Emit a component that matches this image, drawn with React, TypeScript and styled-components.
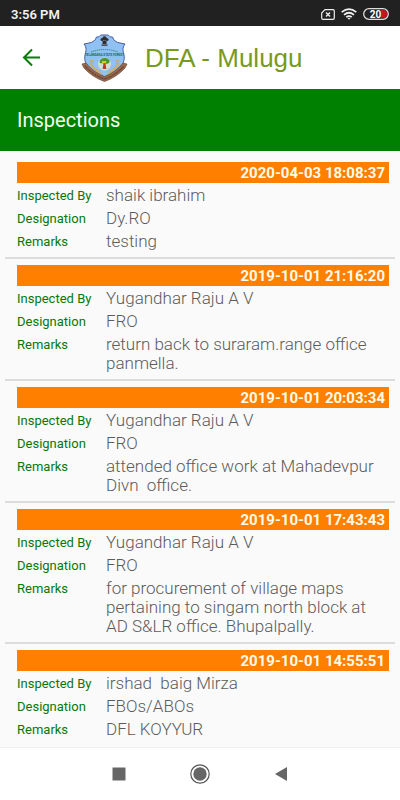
import React from "react";
import styled, { createGlobalStyle } from "styled-components";

const GlobalStyle = createGlobalStyle`
  * { box-sizing: border-box; }
  body { margin: 0; background: #fafafa; font-family: Roboto, "Liberation Sans", sans-serif; }
  h1, h2, dl, dd, p, ul { margin: 0; padding: 0; }
`;

const Screen = styled.div`
  height: 100vh;
  display: flex;
  flex-direction: column;
  overflow: hidden;
`;

const StatusBar = styled.div`
  flex: none;
  display: flex;
  align-items: center;
  justify-content: space-between;
  height: 26px;
  padding: 2px 11px 0;
  background: #212121;
  color: #f2f2f2;
  font-size: 13px;
  font-weight: 600;
`;

const StatusIcons = styled.div`
  display: flex;
  align-items: center;
  gap: 6px;
  svg { display: block; }
`;

const Header = styled.header`
  flex: none;
  display: flex;
  align-items: center;
  height: 63px;
  padding: 0 20px;
  background: #fff;
`;

const IconButton = styled.button`
  display: grid;
  place-items: center;
  padding: 0;
  border: 0;
  background: none;
  cursor: pointer;
  svg { display: block; }
`;

const Emblem = styled.svg`
  flex: none;
  margin: 0 17px 0 38px;
`;

const Brand = styled.h1`
  color: #789a1c;
  font: 400 26px/32px "Liberation Sans", Arial, sans-serif;
  white-space: nowrap;
`;

const TitleBar = styled.h2`
  flex: none;
  && { padding: 0 17px; }
  background: #008000;
  color: #f4fff0;
  font-size: 20px;
  font-weight: 400;
  line-height: 62px;
`;

const List = styled.ul`
  flex: 1;
  min-height: 0;
  overflow: hidden;
  && { padding: 11px 5px 0; }
  list-style: none;
`;

const Item = styled.li`
  padding: 0 6px 6px 12px;
  margin-bottom: 6px;
  border-bottom: 2px solid #dcdcdc;
  &:last-child { border-bottom: 0; }
`;

const Stamp = styled.time`
  display: block;
  padding: 0 4px;
  margin-bottom: 3px;
  background: #ff7f00;
  color: #fffbe8;
  font-size: 15px;
  font-weight: 700;
  line-height: 22px;
  height: 21px;
  text-align: right;
`;

const Details = styled.dl`
  display: grid;
  grid-template-columns: 89px 1fr;
  row-gap: 4px;
  && { padding-right: 12px; }
`;

const Label = styled.dt`
  color: #087808;
  font-size: 13px;
  line-height: 20px;
  height: 19px;
`;

const Value = styled.dd`
  color: #5c5c5c;
  font-size: 17px;
  font-weight: 300;
  line-height: 19px;
  white-space: pre-wrap;
`;

const NavBar = styled.nav`
  flex: none;
  display: flex;
  align-items: center;
  justify-content: center;
  gap: 60px;
  height: 53px;
  background: #fff;
  border-top: 1px solid #f0f0f0;
`;

interface Inspection {
  time: string;
  by: string;
  designation: string;
  remarks: string;
}

const inspections: Inspection[] = [
  { time: "2020-04-03 18:08:37", by: "shaik ibrahim", designation: "Dy.RO", remarks: "testing" },
  { time: "2019-10-01 21:16:20", by: "Yugandhar Raju A V", designation: "FRO", remarks: "return back to suraram.range office panmella." },
  { time: "2019-10-01 20:03:34", by: "Yugandhar Raju A V", designation: "FRO", remarks: "attended office work at Mahadevpur Divn  office." },
  { time: "2019-10-01 17:43:43", by: "Yugandhar Raju A V", designation: "FRO", remarks: "for procurement of village maps pertaining to singam north block at AD S&LR office. Bhupalpally." },
  { time: "2019-10-01 14:55:51", by: "irshad  baig Mirza", designation: "FBOs/ABOs", remarks: "DFL KOYYUR" },
];

const ForestEmblem = () => (
  <Emblem width="48" height="50" viewBox="0 0 48 50" role="img" aria-label="Telangana State Forest emblem">
    <path d="M16.500 4C19 4.500 20 2.500 21 2H28C29 2.500 30 4.500 32.500 4Q34 9 40 10L45 11C42 15 43 18 44 22C46 32 36 41 24.500 46C12 41 3 32 5 22C6 18 7 15 4 11L9 10Q15 9 16.500 4Z" fill="#8fc1f5" stroke="#4a5c9c" strokeWidth="1" />
    <g fill="#352d2a">
      <circle cx="24.500" cy="5.500" r="2.200" /><circle cx="22" cy="6.500" r="1.500" /><circle cx="27" cy="6.500" r="1.500" />
      <path d="M22.500 8h4v3h-4zM21.500 11.500h6v1.300h-6z" />
    </g>
    <path d="M11 19Q24.500 14 38 19" fill="none" stroke="#4d9a83" strokeWidth="1.200" strokeDasharray="1.400 .6" />
    <text x="24.500" y="23" textAnchor="middle" fill="#176a5a" fontSize="3" fontWeight="700">TELANGANA STATE FOREST</text>
    <path d="M12 27C10 33 14 37 21 40M37 27C39 33 35 37 28 40" fill="none" stroke="#c9ab6c" strokeWidth="3.200" strokeDasharray="2 .8" />
    <circle cx="24.500" cy="31" r="6.500" fill="#cfe0d2" />
    <path d="M23.500 30h2l.8 6h-3.600z" fill="#c03a22" />
    <path d="M19.500 29c0-2 2-4 5-4s6 2 5 4-3 2-5 1.500-5 .5-5-1.500z" fill="#4d9a2c" />
    <path d="M22 28h4v2h-4z" fill="#d7ca28" />
    <path d="M2 31L6 30Q13 39 24.500 43.500Q36 39 43 30L47 31L45 35Q37 44 24.500 48.500Q12 44 4 35Z" fill="#99674a" stroke="#6a4838" strokeWidth=".7" />
    <path d="M5 33Q13 42 24.500 46Q36 42 44 33" fill="none" stroke="#5d3e34" strokeWidth="1.400" strokeDasharray="1 .7 1.500 .6" />
  </Emblem>
);

const App = () => (
  <>
    <GlobalStyle />
    <Screen>
      <StatusBar>
        <span>3:56 PM</span>
        <StatusIcons>
          <svg width="14" height="11" viewBox="0 0 14 11" fill="none" stroke="#eee" strokeWidth="1.2">
            <path d="M4 .7h8q1.300 0 1.300 1.300v7q0 1.300-1.300 1.300H2Q.7 10.300.7 9V4z" />
            <path d="M5 3.500l4 4M9 3.500l-4 4" strokeWidth="1.400" />
          </svg>
          <svg width="16" height="12" viewBox="0 0 16 12" fill="none" stroke="#eee" strokeWidth="1.700">
            <path d="M.7 4.200Q8-2 15.300 4.200M3 6.800Q8 2.700 13 6.800M5.200 9.200Q8 7 10.800 9.200" />
            <path d="M6.500 10.300L8 11.800 9.500 10.300Q8 9.300 6.500 10.300Z" fill="#eee" stroke="none" />
          </svg>
          <svg width="26" height="12" viewBox="0 0 26 12">
            <path d="M18 2h2a4 4 0 010 8h-2z" fill="#c8141b" />
            <rect x=".7" y=".7" width="24.600" height="10.600" rx="5.300" fill="none" stroke="#ddd" strokeWidth="1.300" />
            <text x="12.500" y="9.500" textAnchor="middle" fill="#fff" fontSize="10" fontWeight="700">20</text>
          </svg>
        </StatusIcons>
      </StatusBar>
      <Header>
        <IconButton aria-label="Back">
          <svg width="22" height="20" viewBox="0 0 22 20" fill="none" stroke="#087d08" strokeWidth="2">
            <path d="M20 9.500H4M12 1.500L4 9.500l8 8" />
          </svg>
        </IconButton>
        <ForestEmblem />
        <Brand>DFA - Mulugu</Brand>
      </Header>
      <TitleBar>Inspections</TitleBar>
      <List>
        {inspections.map((item) => (
          <Item key={item.time}>
            <Stamp>{item.time}</Stamp>
            <Details>
              <Label>Inspected By</Label>
              <Value>{item.by}</Value>
              <Label>Designation</Label>
              <Value>{item.designation}</Value>
              <Label>Remarks</Label>
              <Value>{item.remarks}</Value>
            </Details>
          </Item>
        ))}
      </List>
      <NavBar>
        <IconButton aria-label="Recent apps">
          <svg width="20" height="20" viewBox="0 0 20 20"><path d="M3.500 3.500h13v13h-13z" fill="#666" /></svg>
        </IconButton>
        <IconButton aria-label="Home">
          <svg width="22" height="22" viewBox="0 0 22 22">
            <circle cx="11" cy="11" r="9.200" fill="none" stroke="#555" strokeWidth="1.200" />
            <circle cx="11" cy="11" r="6.700" fill="#666" />
          </svg>
        </IconButton>
        <IconButton aria-label="Back">
          <svg width="20" height="20" viewBox="0 0 20 20"><path d="M16 3v14L4 10z" fill="#666" /></svg>
        </IconButton>
      </NavBar>
    </Screen>
  </>
);

export default App;
